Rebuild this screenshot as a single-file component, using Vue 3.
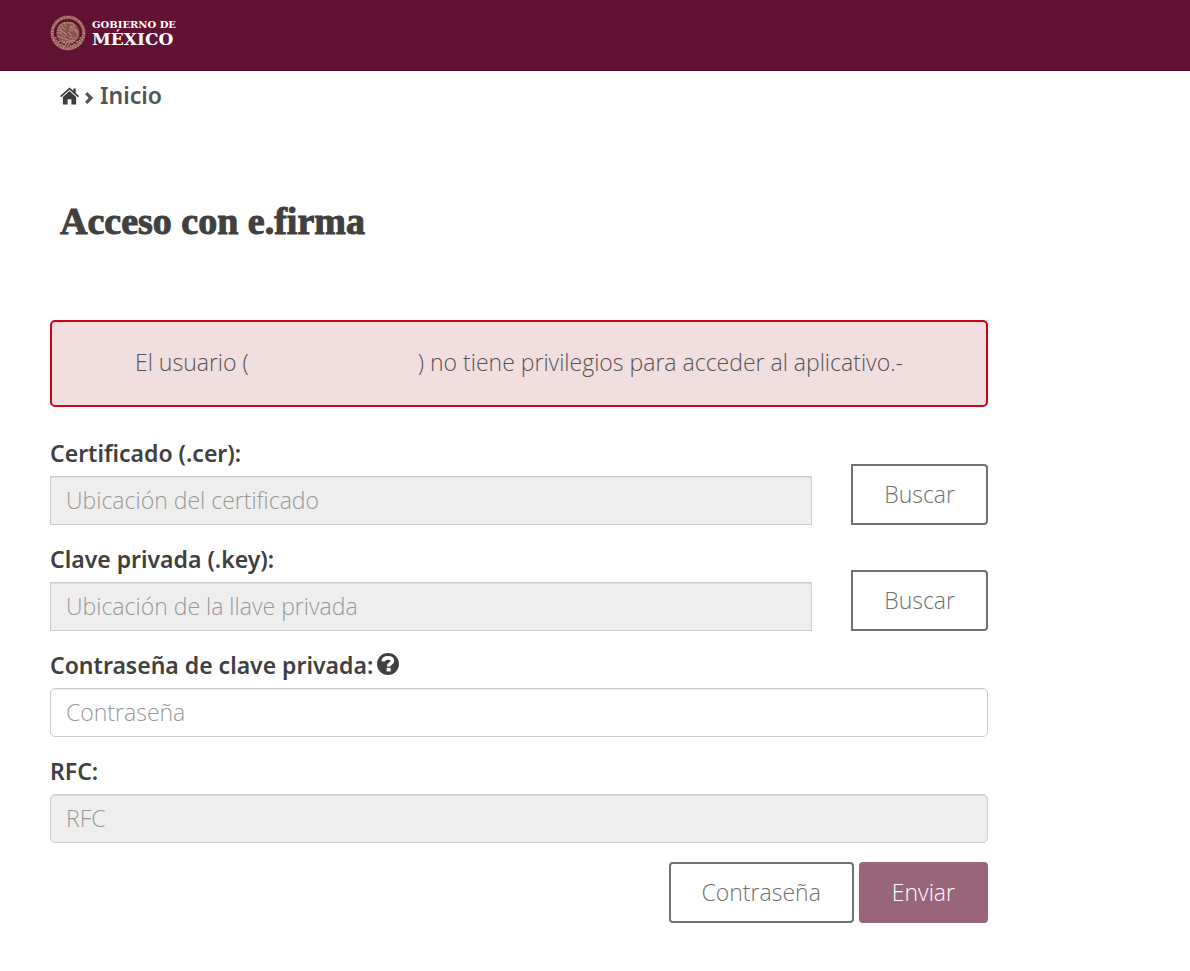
<script setup>
import { ref } from 'vue'

const certificado = ref('')
const llave = ref('')
const password = ref('')
const rfc = ref('')
</script>

<template>
  <header class="navbar">
    <a href="#" class="brand">
      <svg class="seal" viewBox="0 0 36 36" fill="none" stroke="#b98d74">
        <circle cx="18" cy="18" r="15.800" stroke="#8a5250" stroke-width="3.400" />
        <circle cx="18" cy="18" r="15.800" stroke-width="2.600" stroke-dasharray="1.200 1 .6 .9 1.500 1.100" />
        <path fill="#8a5250" stroke="none" d="M8 11c4-4 8-5 13-4l4 2c4 3 5 7 4 11s-5 7-10 8-9 0-11-4-2-9 0-13z" />
        <path stroke-width="1" d="M9 11c3-3 6-4 9-3l5 0 2 3-3 0-2 1c5 1 8 4 8 8s-2 5-5 6M8 13c3-1 6 0 8 2M18 17l4 4M7 15.500c4-1 6 1 9 4M19 22c3 1 5 1 7 1M6.500 18c4-1 6 2 9 4M7 21c3 0 5 2 8 3s5 2 8 1M11 9l2 3M14 7.500l2 4M20 12l3 4M19 14l2 3M24 13l3 5M14 17l3 4M10 14l2 4" />
        <path stroke-width="1.300" stroke-dasharray="2 .8" d="M5.500 22c1 5 5 8.500 10 9.500M30.500 22c-1 5-5 8.500-10 9.500M8 27l5-1M11 29.500l4-2M28 27l-5-1M25 29.500l-4-2M14 31h8M13 27h10M15 29h6" />
      </svg>
      <span class="brand-text">
        <span class="brand-small">GOBIERNO DE</span>
        <span class="brand-big">MÉXICO</span>
      </span>
    </a>
  </header>

  <main class="container">
    <nav class="breadcrumb">
      <a href="#" class="home" aria-label="Portada">
        <svg viewBox="0 0 20 18">
          <path fill="#393c3e" d="M10 0 0 9l1.200 1.200L10 2.400l8.800 7.800L20 9l-3.500-3.200V1h-2.500v2.500z" />
          <path fill="#393c3e" d="M10 3.700 3 10V18h5v-5.500h4V18h5v-8z" />
        </svg>
      </a>
      <svg class="arrow" viewBox="0 0 9 12">
        <path fill="none" stroke="#545454" stroke-width="3.200" d="M1.200 1.200 6 6l-4.800 4.800" />
      </svg>
      <a href="#" class="crumb">Inicio</a>
    </nav>

    <h1>Acceso con e.firma</h1>

    <div class="alert" role="alert">
      El usuario (<span class="user"></span>) no tiene privilegios para acceder al aplicativo.-
    </div>

    <form @submit.prevent>
      <div class="file-row">
        <div class="form-group">
          <label for="certificado">Certificado (.cer):</label>
          <input id="certificado" v-model="certificado" class="square" type="text" placeholder="Ubicación del certificado" disabled>
        </div>
        <button type="button" class="btn btn-search">Buscar</button>
      </div>
      <div class="file-row">
        <div class="form-group">
          <label for="llave">Clave privada (.key):</label>
          <input id="llave" v-model="llave" class="square" type="text" placeholder="Ubicación de la llave privada" disabled>
        </div>
        <button type="button" class="btn btn-search">Buscar</button>
      </div>
      <div class="form-group">
        <label for="password">Contraseña de clave privada:
          <svg class="help" viewBox="0 0 22 22">
            <circle cx="11" cy="11" r="11" fill="#404041" />
            <path fill="none" stroke="#fff" stroke-width="3.600" d="M6.200 8.400C6.400 5.800 8.400 4.900 11 4.900c2.700 0 4.400 1.100 4.400 3 0 2.800-3.800 2.500-3.800 5.500" />
            <path fill="#fff" d="M9.700 14.800h3.900v3.600H9.700z" />
          </svg>
        </label>
        <input id="password" v-model="password" type="password" placeholder="Contraseña">
      </div>
      <div class="form-group">
        <label for="rfc">RFC:</label>
        <input id="rfc" v-model="rfc" type="text" placeholder="RFC" disabled>
      </div>
      <div class="actions">
        <button type="button" class="btn">Contraseña</button>
        <button type="submit" class="btn btn-primary">Enviar</button>
      </div>
    </form>
  </main>
</template>

<style>
body {
  margin: 0;
  background: #fff;
}
</style>

<style scoped>
.navbar {
  display: flex;
  box-sizing: border-box;
  height: 71px;
  padding: 15px 50px;
  background: #611232;
  border-bottom: 1px solid #4c0d26;
}
.brand {
  display: flex;
  align-items: flex-start;
  gap: 6px;
  color: #fff;
  text-decoration: none;
}
.seal {
  width: 36px;
  height: 36px;
}
.brand-text {
  display: flex;
  flex-direction: column;
  padding-top: 4px;
  font-family: "DejaVu Serif", serif;
  font-weight: bold;
}
.brand-small {
  font-size: 10px;
  line-height: 12px;
}
.brand-big {
  font-size: 17px;
  line-height: 16px;
}
.container {
  padding: 0 202px 48px 50px;
  font-family: "Open Sans", "Noto Sans", sans-serif;
  font-size: 23px;
  font-weight: 300;
  line-height: 32px;
  color: #545454;
}
.breadcrumb {
  display: flex;
  align-items: center;
  padding: 9px 10px;
}
.home {
  display: flex;
}
.home svg {
  width: 19px;
  height: 18px;
}
.arrow {
  width: 9px;
  height: 12px;
  margin: 3px 6px 0;
}
.crumb {
  padding-bottom: 2px;
  color: #545454;
  font-family: "Noto Sans", sans-serif;
  font-weight: 600;
  line-height: 30px;
  text-decoration: none;
}
h1 {
  margin: 76px 10px 74px;
  font-family: "Liberation Serif", serif;
  font-size: 38px;
  font-weight: bold;
  line-height: 49px;
  color: #404041;
  -webkit-text-stroke: 1px #404041;
}
.alert {
  box-sizing: border-box;
  min-height: 87px;
  padding: 24px 30px;
  margin-bottom: 31px;
  border: 2px solid #d0021b;
  border-radius: 5px;
  background: #f2dede;
  text-align: center;
}
.user {
  display: inline-block;
  width: 169px;
}
.file-row {
  display: flex;
  align-items: flex-start;
  gap: 39px;
}
.file-row .form-group {
  flex: 1;
}
.form-group {
  margin-bottom: 19px;
}
label {
  display: flex;
  align-items: center;
  gap: 4px;
  height: 30px;
  margin-bottom: 8px;
  font-family: "Noto Sans", sans-serif;
  font-weight: 600;
  color: #404041;
}
.help {
  width: 22px;
  height: 22px;
  margin-bottom: 2px;
}
input {
  display: block;
  box-sizing: border-box;
  width: 100%;
  height: 49px;
  padding: 5px 15px 7px;
  border: 1px solid #ccc;
  border-radius: 5px;
  background: #fff;
  box-shadow: inset 0 1px 1px rgba(0, 0, 0, .075);
  font: inherit;
  color: #545454;
}
input:disabled {
  background: #eee;
}
input::placeholder {
  color: #999;
  opacity: 1;
}
input.square {
  border-radius: 0;
}
.btn {
  box-sizing: border-box;
  height: 61px;
  padding: 0 31px 2px;
  border: 2px solid #6f7271;
  border-radius: 4px;
  background: #fff;
  font: inherit;
  color: #6f7271;
}
.btn-search {
  margin-top: 26px;
  border-radius: 0 4px 4px 0;
}
.btn-primary {
  border-color: #98657b;
  background: #98657b;
  color: #fff;
}
.actions {
  display: flex;
  justify-content: flex-end;
  gap: 5px;
}
</style>
